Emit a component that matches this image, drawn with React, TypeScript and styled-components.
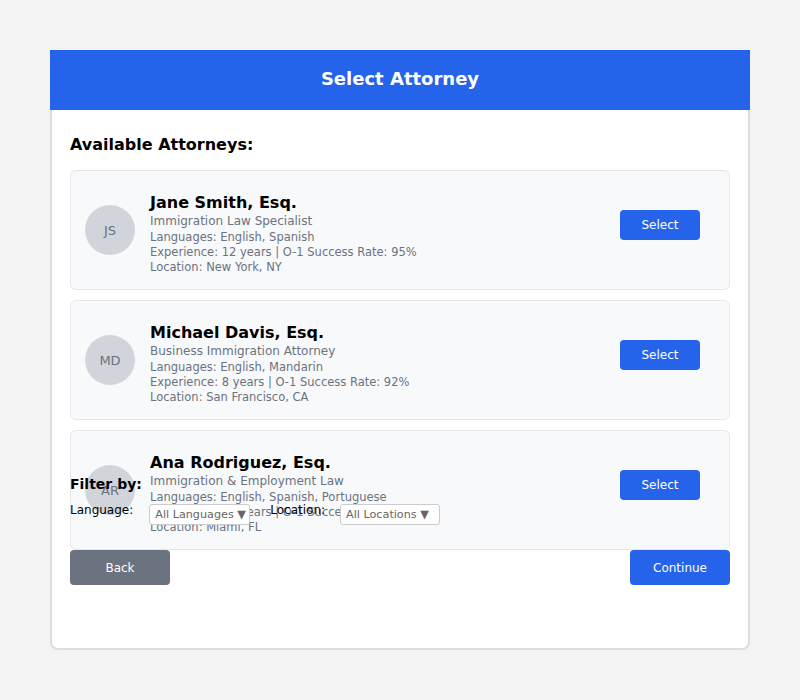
import React from "react";
import styled, { createGlobalStyle } from "styled-components";

const Global = createGlobalStyle`
  html, body { margin: 0; padding: 0; background: #f3f3f3; }
  body { font-family: "DejaVu Sans", Verdana, sans-serif; }
  * { box-sizing: border-box; }
`;

const Page = styled.div`
  padding: 50px 50px;
`;

const Panel = styled.div`
  width: 700px;
  height: 600px;
  background: #ffffff;
  border: 2px solid #dddddd;
  border-top: none;
  border-radius: 0 0 8px 8px;
  display: flex;
  flex-direction: column;
`;

const Header = styled.div`
  height: 60px;
  margin: 0 -2px;
  padding-bottom: 4px;
  background: #2563eb;
  color: #ffffff;
  display: flex;
  align-items: center;
  justify-content: center;
  font-size: 18px;
  font-weight: bold;
`;

const Content = styled.div`
  padding: 20px 18px;
  display: flex;
  flex-direction: column;
`;

const SectionTitle = styled.h3`
  margin: 5px 0 15px;
  font-size: 16px;
  line-height: 20px;
  font-weight: bold;
  color: #000;
`;

const List = styled.div`
  height: 306px;
  display: flex;
  flex-direction: column;
  gap: 10px;
`;

const Card = styled.div`
  flex: none;
  height: 120px;
  background: #f8f9fb;
  border: 1px solid #e5e7eb;
  border-radius: 6px;
  display: flex;
  align-items: center;
  padding: 0 29px 0 14px;
  gap: 15px;
`;

const Avatar = styled.div`
  width: 50px;
  height: 50px;
  border-radius: 50%;
  background: #d1d5db;
  color: #6b7280;
  font-size: 13px;
  display: flex;
  align-items: center;
  justify-content: center;
  flex: none;
`;

const Info = styled.div`
  flex: 1;
  display: flex;
  flex-direction: column;
  padding-top: 7px;
`;

const Name = styled.div`
  font-size: 16px;
  line-height: 20px;
  font-weight: bold;
  color: #000;
`;

const Specialty = styled.div`
  font-size: 12px;
  line-height: 17px;
  color: #6b7280;
`;

const Detail = styled.div`
  font-size: 11.5px;
  line-height: 15px;
  color: #6b7280;
`;

const Button = styled.button<{ $tone?: "blue" | "gray"; $w: number; $h: number; $lift?: number }>`
  width: ${(p) => p.$w}px;
  height: ${(p) => p.$h}px;
  margin-bottom: ${(p) => p.$lift ?? 0}px;
  border: none;
  border-radius: 4px;
  background: ${(p) => (p.$tone === "gray" ? "#6b7280" : "#2563eb")};
  color: #ffffff;
  font-family: "DejaVu Sans", sans-serif;
  font-size: 12px;
  padding: 0;
  flex: none;
`;

const Filters = styled.div`
  display: flex;
  flex-direction: column;
  gap: 8px;
  margin-bottom: 25px;
`;

const FilterTitle = styled.div`
  font-size: 14px;
  line-height: 17px;
  font-weight: bold;
  color: #000;
`;

const FilterRow = styled.div`
  display: flex;
  align-items: flex-start;
`;

const FilterLabel = styled.span<{ $gap: number }>`
  font-size: 12px;
  line-height: 16px;
  color: #000;
  margin-right: ${(p) => p.$gap}px;
  padding-top: 1px;
`;

const FakeSelect = styled.div<{ $w: number }>`
  width: ${(p) => p.$w}px;
  height: 21px;
  margin-top: 3px;
  border: 1px solid #cccccc;
  border-radius: 3px;
  background: #ffffff;
  color: #666666;
  font-size: 11.2px;
  line-height: 19px;
  padding: 0 5px;
  margin-right: 20px;
  white-space: nowrap;
`;

const Footer = styled.div`
  display: flex;
  justify-content: space-between;
`;

const attorneys = [
  {
    initials: "JS",
    name: "Jane Smith, Esq.",
    specialty: "Immigration Law Specialist",
    languages: "English, Spanish",
    exp: "12 years",
    rate: "95%",
    location: "New York, NY",
  },
  {
    initials: "MD",
    name: "Michael Davis, Esq.",
    specialty: "Business Immigration Attorney",
    languages: "English, Mandarin",
    exp: "8 years",
    rate: "92%",
    location: "San Francisco, CA",
  },
  {
    initials: "AR",
    name: "Ana Rodriguez, Esq.",
    specialty: "Immigration & Employment Law",
    languages: "English, Spanish, Portuguese",
    exp: "15 years",
    rate: "97%",
    location: "Miami, FL",
  },
];

export default function App() {
  return (
    <Page>
      <Global />
      <Panel>
        <Header>Select Attorney</Header>
        <Content>
          <SectionTitle>Available Attorneys:</SectionTitle>
          <List>
            {attorneys.map((a) => (
              <Card key={a.initials}>
                <Avatar>{a.initials}</Avatar>
                <Info>
                  <Name>{a.name}</Name>
                  <Specialty>{a.specialty}</Specialty>
                  <Detail>Languages: {a.languages}</Detail>
                  <Detail>
                    Experience: {a.exp} | O-1 Success Rate: {a.rate}
                  </Detail>
                  <Detail>Location: {a.location}</Detail>
                </Info>
                <Button $w={80} $h={30} $lift={10}>Select</Button>
              </Card>
            ))}
          </List>
          <Filters>
            <FilterTitle>Filter by:</FilterTitle>
            <FilterRow>
              <FilterLabel $gap={16}>Language:</FilterLabel>
              <FakeSelect $w={101}>All Languages ▼</FakeSelect>
              <FilterLabel $gap={15}>Location:</FilterLabel>
              <FakeSelect $w={100}>All Locations ▼</FakeSelect>
            </FilterRow>
          </Filters>
          <Footer>
            <Button $tone="gray" $w={100} $h={35}>Back</Button>
            <Button $w={100} $h={35}>Continue</Button>
          </Footer>
        </Content>
      </Panel>
    </Page>
  );
}
